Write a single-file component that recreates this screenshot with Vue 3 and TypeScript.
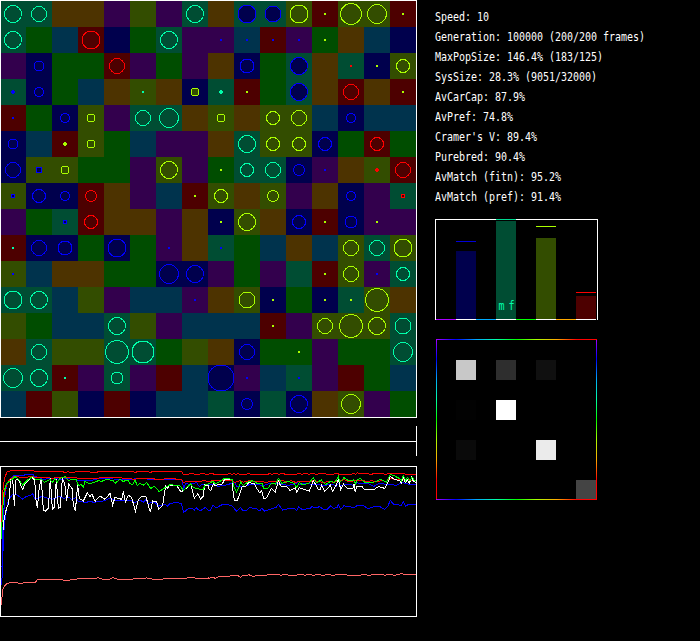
<script setup lang="ts">
interface Ring { color: string; fill: string; d: number }
interface Cell { x: number; y: number; bg: string; ring: Ring | null }

const ground: Record<string, string> = {
  T: '#004d33', O: '#4d3300', P: '#33004d', L: '#334d00',
  R: '#4d0000', G: '#004d00', N: '#00004d', B: '#00334d',
}
const bright: Record<string, string> = { t: '#00ffaa', l: '#aaff00', b: '#0000ff', r: '#ff0000' }
const inner: Record<string, string> = { t: '#004d33', l: '#334d00', b: '#00004d', r: '#4d0000' }

// Each token: habitat letter, then optional species letter and ring diameter.
const world: string[] = [
  'Tt18 Tt16 O O P L P Tt18 O Tb19 Tb17 Ll19 Rl2 Ll22 Ll20 Rl2',
  'Tt18 G B Rr19 N G Tt18 P Pb2 Bb2 Rb2 Pb2 Gl2 O B N',
  'P Nb11 G G Rr16 P G P O Nb15 G Tb18 O Tr2 Nl2 Ll14',
  'Tb4 Nb10 G B O Lt2 O Nl8 Tt4 Rl2 G Tb18 O Rr16 O Rl2',
  'Rb2 G Nb10 Ll8 P Tt16 Tt20 O Ll8 O Ll14 Ll16 B Nb10 B B',
  'Nb11 B Rl4 Ll8 G B P P O Tt18 Ll14 Ll14 Nb14 G Rr14 G',
  'Nb16 Lb6 Ll8 G G P Ll18 P Gl2 Tt14 Tt16 Nb12 Pb2 O Lr4 Rr16',
  'Lb5 Nb14 Nb10 Rr12 O P B Rl2 Ll14 O Ll12 P O Nb10 P Tr5',
  'P G Tb5 Rr14 O O P O Nl2 Ll18 O Nb14 Rl2 Nb13 Pl2 P',
  'Rt2 Nb16 Nb15 G Nb19 G Pb2 O Tb2 G B O B Ll16 Tt16 Ll19',
  'Lb2 B O O G G Nb20 Nb18 P G P T Rl2 Ll16 Pb2 Tt14',
  'Tt19 Tt18 B L P B B Pb2 O Ll17 Nl2 G Nl2 Tl2 Ll24 O',
  'L G B B Tt18 L P B B B Rl2 P Ll16 Ll24 Ll18 Tt17',
  'O Tt16 L L Tt24 Tt23 G L O Nb16 G Gl2 P G G Tt20',
  'Tt20 Tt18 Rt2 P Tt13 P R B Nb27 Pb2 B Tb2 P R G B',
  'B R L N R N B B T Nb12 T Nb18 O Ll20 P G',
]

const cells: Cell[] = world.flatMap((row, y) =>
  row.split(' ').map((t, x) => ({
    x: x * 26,
    y: y * 26 + 1,
    bg: ground[t[0]],
    ring: t.length > 1 ? { color: bright[t[1]], fill: inner[t[1]], d: Number(t.slice(2)) } : null,
  })),
)
const rings = cells.filter((c) => c.ring !== null) as (Cell & { ring: Ring })[]

const stats: string[] = [
  'Speed: 10',
  'Generation: 100000 (200/200 frames)',
  'MaxPopSize: 146.4% (183/125)',
  'SysSize: 28.3% (9051/32000)',
  'AvCarCap: 87.9%',
  'AvPref: 74.8%',
  "Cramer's V: 89.4%",
  'Purebred: 90.4%',
  'AvMatch (fitn): 95.2%',
  'AvMatch (pref): 91.4%',
]

const bars = [
  { base: '#aa00ff', fill: '', h: 0, mark: '', at: 0, label: '' },
  { base: '#ffffff', fill: '#00004d', h: 68, mark: '#0000d8', at: 22, label: '' },
  { base: '#00aaff', fill: '', h: 0, mark: '', at: 0, label: '' },
  { base: '#ffffff', fill: '#004d33', h: 98, mark: '#00d890', at: 0, label: 'm f' },
  { base: '#00ff00', fill: '', h: 0, mark: '', at: 0, label: '' },
  { base: '#ffffff', fill: '#334d00', h: 81, mark: '#aaff00', at: 7, label: '' },
  { base: '#ffaa00', fill: '', h: 0, mark: '', at: 0, label: '' },
  { base: '#ffffff', fill: '#4d0000', h: 23, mark: '#ff0000', at: 73, label: '' },
]

const shades: Record<number, string> = {
  9: '#c8c8c8', 11: '#2e2e2e', 13: '#101010', 25: '#020202', 27: '#ffffff',
  41: '#0a0a0a', 45: '#ebebeb', 63: '#444444',
}
const matrix = Array.from({ length: 64 }, (_, i) => shades[i] ?? 'transparent')

// History samples in thirds of a pixel; the second string continues after x = 624.
function join(a: string, b: string): string {
  const tail = b.split(' ').map((p) => {
    const [x, y] = p.split(',').map(Number)
    return `${x + 624},${y}`
  })
  return a + ' ' + tail.join(' ')
}

const series = [
  {
    color: '#ff6666',
    points: join(
      '5,555 7,510 12,500 22,490 36,487 52,488 60,491 80,487 106,487 112,479 150,480 165,478 200,481 228,478 235,476 280,476 295,473 305,477 330,477 338,473 350,477 400,477 440,474 455,477 490,477 540,476 570,473 600,475 624,474',
      '0,475 15,472 22,475 32,470 60,470 70,467 90,467 97,472 104,467 116,468 122,464 135,469 150,466 170,466 190,463 210,463 218,466 230,463 245,466 260,466 280,463 290,466 305,463 315,466 330,463 345,466 360,463 375,466 390,463 410,463 420,466 455,466 470,463 480,466 505,463 520,463 530,466 545,463 560,466 580,461 595,465 604,463 624,463',
    ),
  },
  {
    color: '#ff0000',
    points: join(
      '4,330 5,270 9,210 12,185 16,168 22,155 34,152 100,152 104,155 188,155 196,158 205,155 214,158 230,155 260,155 290,158 294,155 400,155 405,158 412,155 445,155 451,158 456,155 545,155 551,164 575,161 590,163 610,161 624,164',
      '0,163 10,160 20,163 58,163 66,160 72,163 78,160 84,163 90,160 96,163 116,163 120,160 128,163 180,163 184,160 192,163 205,160 212,163 224,160 232,163 262,163 274,160 280,163 296,160 302,163 316,160 322,163 345,160 360,163 376,163 382,160 396,163 430,163 438,160 444,163 448,158 456,161 480,161 488,163 505,160 520,160 530,163 545,161 580,161 600,163 624,163',
    ),
  },
  {
    color: '#0000ff',
    points: join(
      '6,440 9,320 14,230 20,195 30,178 40,167 72,167 76,163 90,165 100,163 103,170 118,172 128,178 160,175 180,178 205,176 235,181 275,181 300,175 340,177 400,178 405,175 440,177 480,178 520,177 545,177 551,205 557,190 567,193 590,188 598,200 605,193 624,192',
      '0,196 20,193 30,199 50,196 72,190 80,187 86,199 110,199 130,192 150,194 165,197 180,192 210,190 240,196 260,193 268,187 276,194 290,190 320,194 352,196 370,192 385,198 391,190 400,198 412,192 440,196 448,187 455,192 480,190 498,199 512,191 545,193 565,196 582,187 600,192 624,194',
    ),
  },
  {
    color: '#ff0000',
    points: join(
      '7,270 14,215 20,195 28,180 40,170 76,172 98,169 104,172 130,172 160,175 170,172 210,172 240,175 290,176 300,173 350,173 380,175 405,178 415,175 450,175 470,178 490,178 500,175 520,175 530,178 545,178 550,187 565,184 600,185 610,182 624,184',
      '0,185 14,182 30,182 55,180 72,182 80,187 98,182 106,187 122,182 140,184 160,184 170,187 200,184 212,184 225,182 235,187 250,182 262,187 274,184 300,186 316,182 330,185 350,187 366,184 376,187 391,182 410,179 420,184 450,182 468,182 475,185 490,182 505,185 520,182 535,184 547,175 560,178 580,180 596,178 612,181 624,182',
    ),
  },
  {
    color: '#0000ff',
    points: join(
      '5,494 8,440 10,350 16,290 24,245 36,224 48,223 68,237 78,230 92,226 98,221 103,234 115,235 125,229 140,234 157,238 180,229 190,235 207,232 214,238 228,233 236,245 260,247 270,243 280,247 310,243 330,235 345,241 370,240 390,240 405,248 420,240 430,247 436,240 445,250 463,246 476,258 494,252 502,258 510,250 530,248 544,250 551,277 565,266 576,264 583,271 588,263 600,273 617,262 624,270',
      '0,270 6,273 15,256 24,264 42,254 60,254 72,257 86,274 98,262 104,272 116,272 124,262 146,267 155,273 161,265 170,273 184,269 205,262 211,253 224,270 246,265 260,266 266,272 272,261 282,268 305,266 312,259 322,264 335,260 348,269 358,268 368,258 376,265 388,262 391,253 398,268 408,257 420,260 440,262 450,255 468,258 480,266 498,260 512,258 530,268 540,258 547,241 556,252 580,256 586,244 593,259 600,254 624,255',
    ),
  },
  {
    color: '#ffffff',
    points: join(
      '11,330 12,300 20,262 26,250 32,180 38,176 43,257 48,180 54,176 60,190 68,208 75,190 85,183 95,172 104,180 108,240 112,265 118,200 124,178 130,270 136,273 145,265 151,175 157,268 163,262 169,178 175,265 181,262 187,175 194,190 200,242 206,192 216,205 220,256 226,274 233,195 238,235 250,243 262,218 270,230 276,222 285,244 300,228 315,238 330,220 338,255 345,232 365,238 370,214 376,246 385,226 395,232 406,274 415,240 425,229 438,231 451,277 458,243 470,246 476,268 488,255 497,197 503,205 509,195 530,196 543,216 560,204 572,190 583,234 593,222 602,237 610,228 614,195 624,196',
      '0,205 8,212 16,192 22,198 30,193 42,193 50,178 72,180 76,225 80,241 88,241 95,222 102,200 115,198 122,188 138,190 146,205 155,218 161,212 167,236 176,233 190,205 202,216 211,182 218,198 236,200 246,211 262,204 266,216 274,203 304,213 316,182 324,196 330,208 337,208 341,196 350,214 360,204 367,196 374,214 385,195 391,178 398,208 406,192 418,205 436,204 438,193 442,217 446,200 462,200 468,207 500,207 512,200 530,205 536,195 547,170 558,177 575,182 580,190 587,170 592,188 598,178 604,190 611,172 616,184 624,188',
    ),
  },
  {
    color: '#00ff00',
    points: join(
      '4,356 5,325 8,270 12,215 20,190 34,180 45,170 56,178 68,195 80,182 98,170 106,178 125,178 133,187 150,178 157,188 165,176 172,187 180,175 195,170 205,182 216,178 228,178 235,196 244,194 250,202 255,184 268,192 280,188 295,182 305,184 320,178 340,182 345,190 360,178 372,186 376,180 385,182 390,190 398,195 405,180 412,197 418,190 430,196 440,187 452,206 462,198 478,215 495,203 510,194 530,196 540,198 550,211 572,192 580,203 598,207 610,208 616,192 624,192',
      '0,192 14,184 22,192 34,185 50,175 72,178 78,200 85,216 92,203 98,186 106,196 120,186 134,182 150,192 162,190 167,206 180,205 190,190 202,192 211,175 222,190 240,184 258,190 266,202 274,187 285,195 302,190 316,173 326,188 340,180 352,194 368,184 380,188 391,170 396,187 408,173 420,181 436,180 442,192 448,178 458,176 470,187 500,186 516,178 535,186 547,163 560,168 575,176 580,182 586,167 593,182 598,172 606,184 612,170 618,180 624,182',
    ),
  },
]
</script>

<template>
  <main class="app">
    <section class="left">
      <svg class="world" width="417" height="418" viewBox="0 0 417 418" shape-rendering="crispEdges">
        <rect v-for="(c, i) in cells" :key="i" :x="c.x" :y="c.y" width="26" height="26" :fill="c.bg" />
        <rect x="0.5" y="0.5" width="416" height="417" fill="none" stroke="#fff" />
        <template v-for="(c, i) in rings" :key="'r' + i">
          <rect v-if="c.ring.d === 2" :x="c.x + 12" :y="c.y + 12" width="2" height="2" :fill="c.ring.color" />
          <path
            v-else-if="c.ring.d === 4"
            :d="`M${c.x + 12} ${c.y + 11}h2v1h1v2h-1v1h-2v-1h-1v-2h1z`" :fill="c.ring.color"
          />
          <rect
            v-else-if="c.ring.d < 7" :x="c.x + 17 - c.ring.d - 0.5" :y="c.y + 17 - c.ring.d - 0.5"
            :width="c.ring.d * 2 - 7" :height="c.ring.d * 2 - 7"
            :fill="c.ring.fill" :stroke="c.ring.color"
          />
          <path
            v-else-if="c.ring.d === 8"
            :d="`M${c.x + 10.5} ${c.y + 9.5}h5l1 1v5l-1 1h-5l-1 -1v-5z`"
            :fill="c.ring.fill" :stroke="c.ring.color"
          />
          <circle
            v-else :cx="c.x + 13" :cy="c.y + 13" :r="(c.ring.d - 1) / 2"
            :fill="c.ring.fill" :stroke="c.ring.color"
          />
        </template>
      </svg>
      <div class="timeline"><i class="axis"></i></div>
      <svg class="history" width="417" height="151" viewBox="0 138 1251 453" shape-rendering="crispEdges">
        <polyline
          v-for="(s, i) in series" :key="i" :points="s.points" fill="none"
          :stroke="s.color" stroke-width="3"
        />
        <rect x="1.5" y="139.5" width="1248" height="450" fill="none" stroke="#fff" stroke-width="3" />
      </svg>
    </section>

    <section class="right">
      <ul class="stats">
        <li v-for="s in stats" :key="s"><span>{{ s }}</span></li>
      </ul>
      <div class="bars">
        <div v-for="(b, i) in bars" :key="i" class="slot" :style="{ borderBottomColor: b.base }">
          <div class="bar" :style="{ height: b.h + 'px', background: b.fill }">
            <span v-if="b.label" class="label">{{ b.label }}</span>
          </div>
          <i v-if="b.mark" class="mark" :style="{ top: b.at + 'px', background: b.mark }"></i>
        </div>
      </div>
      <div class="matrix">
        <div class="shades">
          <i v-for="(m, i) in matrix" :key="i" :style="{ background: m }"></i>
        </div>
      </div>
    </section>
  </main>
</template>

<style>
body {
  background: #000;
  margin: 0;
}
</style>

<style scoped>
.app {
  display: flex;
  gap: 18px;
  width: 700px;
  height: 641px;
  overflow: hidden;
  background: #000;
  color: #fff;
  font-family: "DejaVu Sans Mono", monospace;
}
.left {
  display: flex;
  flex-direction: column;
  width: 417px;
}
svg {
  display: block;
}
.timeline {
  box-sizing: border-box;
  height: 30px;
  margin: 8px 0 10px;
  padding-top: 15px;
  border-right: 1px solid #fff;
}
.axis {
  display: block;
  height: 1px;
  background: #fff;
}
.right {
  display: flex;
  flex-direction: column;
  align-items: flex-start;
}
.stats {
  list-style: none;
  margin: 0;
  padding: 7px 0 12px;
}
.stats li {
  height: 20px;
  line-height: 20px;
  font-size: 10px;
  letter-spacing: -0.02px;
  white-space: pre;
}
.stats span {
  display: inline-block;
  transform: translateY(0.5px) scaleY(1.25);
}
.bars {
  box-sizing: border-box;
  display: flex;
  width: 163px;
  height: 101px;
  border: 1px solid #fff;
  border-bottom: 0;
}
.slot {
  position: relative;
  box-sizing: border-box;
  display: flex;
  flex-direction: column;
  justify-content: flex-end;
  width: 20px;
  height: 100px;
  border-bottom: 1px solid #fff;
}
.bar {
  display: flex;
  align-items: flex-end;
  justify-content: center;
}
.label {
  color: #00ffaa;
  font-size: 10px;
  line-height: 12px;
  padding-bottom: 6px;
  letter-spacing: -1px;
  white-space: pre;
  transform: scaleY(1.2);
}
.mark {
  position: absolute;
  left: 0;
  width: 20px;
  height: 1px;
  margin-top: -1px;
}
.matrix {
  --hues: #aa00ff, #0000ff 12.5%, #00aaff 25%, #00ffaa 37.5%, #00ff00 50%, #aaff00 62.5%, #ffaa00 75%, #ff0000 87.5%;
  box-sizing: border-box;
  width: 161px;
  height: 161px;
  margin: 19px 0 0 1px;
  padding-top: 1px;
  background:
    linear-gradient(to right, var(--hues)) top / 100% 1px no-repeat,
    linear-gradient(to right, var(--hues)) bottom / 100% 1px no-repeat,
    linear-gradient(to bottom, var(--hues)) left / 1px 100% no-repeat,
    linear-gradient(to bottom, var(--hues)) right / 1px 100% no-repeat;
}
.shades {
  display: grid;
  grid-template-columns: repeat(8, 20px);
  grid-template-rows: repeat(8, 20px);
  width: 160px;
  height: 159px;
  overflow: hidden;
}
</style>
